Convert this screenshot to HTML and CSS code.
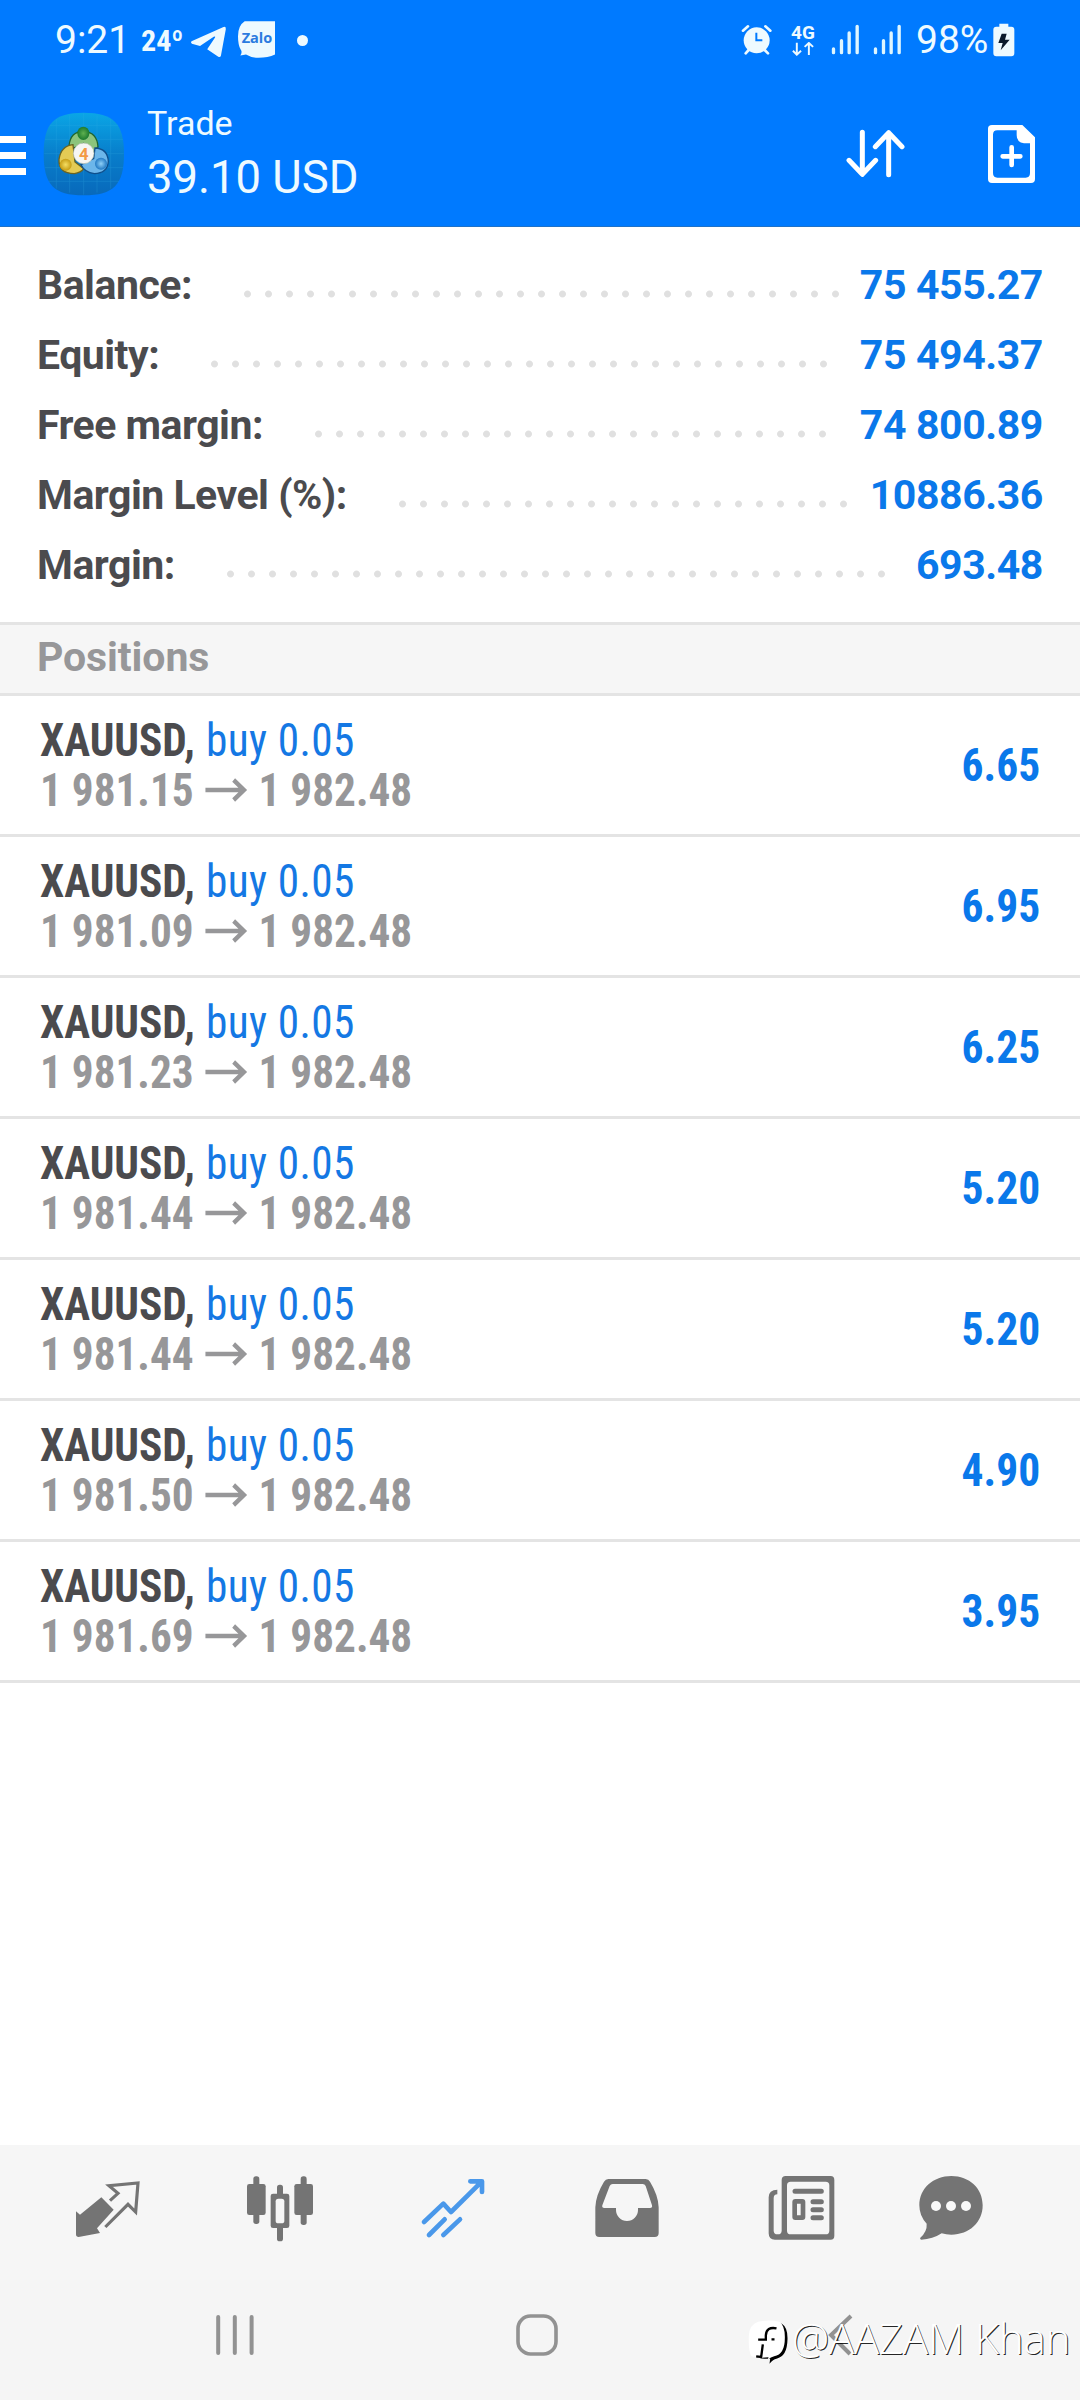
FILE: index.html
```html
<!DOCTYPE html>
<html lang="en">
<head>
<meta charset="utf-8">
<title>Trade</title>
<link rel="stylesheet" href="styles.css">
</head>
<body>
<div class="screen">
  <header class="header">
    <div class="status">
      <span class="clock">9:21</span>
      <span class="temp">24º</span>
      <svg class="telegram" viewBox="570 76 112 98"><path d="M574 123L672 79Q680 77 679 86L664 167Q662 173 656 170L622 147L646 111Q648 106 642 109L600 137L575 130Q570 126 574 123Z" fill="#eefaff"/></svg>
      <svg class="zalo" viewBox="711 60 117 116"><path d="M734 63H825V163Q804 173 775 173Q752 172 738 163L721 166Q728 156 722 148Q714 134 714 108Q714 76 734 63Z" fill="#eefaff"/><text x="725" y="130" textLength="92" lengthAdjust="spacingAndGlyphs" class="zalo-text">Zalo</text></svg>
      <span class="more-dot"></span>
      <span class="spacer"></span>
      <svg class="alarm" viewBox="123 72 93 93"><circle cx="170" cy="121" r="39" fill="#eefaff"/><path d="M129 92L144 79M196 79L211 92M146 150L137 160M194 150L204 160" stroke="#eefaff" stroke-width="8" stroke-linecap="round"/><path d="M169 98V121H187" fill="none" stroke="#007aff" stroke-width="6"/></svg>
      <div class="network"><span class="net-label">4G</span><svg class="net-arrows" viewBox="273 126 72 43"><path d="M290 128V164M278 153L290 165L303 153M327 166V130M314 141L327 129L340 141" fill="none" stroke="#eefaff" stroke-width="6"/></svg></div>
      <svg class="signal" viewBox="392 72 86 93"><path d="M399 147V158M423 122V158M446 99V158M470 79V158" stroke="#dff6ff" stroke-width="10" stroke-linecap="round"/></svg>
      <svg class="signal" viewBox="392 72 86 93"><path d="M399 147V158M423 122V158M446 99V158M470 79V158" stroke="#dff6ff" stroke-width="10" stroke-linecap="round"/></svg>
      <span class="percent">98%</span>
      <svg class="battery" viewBox="881 68 66 102"><path d="M900 79V70H927V79H936Q945 79 945 88V158Q945 168 936 168H891Q882 168 882 158V88Q882 79 891 79Z" fill="#eefaff"/><path d="M907 100H922L917 118H931L904 150L910 128H897Z" fill="#0b1a2b"/></svg>
    </div>
    <div class="appbar">
      <svg class="menu" viewBox="0 0 27 40"><path d="M0 4.5H26M0 20.5H26M0 36.5H26" stroke="#fff" stroke-width="6.8"/></svg>
      <svg class="logo" viewBox="10 10 246 252">
        <defs>
          <linearGradient id="sky" x2="0" y2="1"><stop offset="0" stop-color="#0aa6e6"/><stop offset=".5" stop-color="#087ecb"/><stop offset="1" stop-color="#0869bb"/></linearGradient>
          <radialGradient id="green"><stop offset="0" stop-color="#5fb04f"/><stop offset="1" stop-color="#1c7a2e"/></radialGradient>
          <radialGradient id="gold"><stop offset="0" stop-color="#f5de62"/><stop offset="1" stop-color="#c59c14"/></radialGradient>
          <radialGradient id="blue"><stop offset="0" stop-color="#8fd0f7"/><stop offset="1" stop-color="#2179c4"/></radialGradient>
        </defs>
        <path d="M132 12C222 12 253 44 253 136S222 260 132 260S12 228 12 136S42 12 132 12Z" fill="url(#sky)"/>
        <path d="M50 32V240M90 20V252M132 14V258M172 20V252M213 32V240M30 50H236M16 92H250M14 135H252M16 177H250M28 218H238" stroke="#39b4e8" stroke-width="2" opacity=".3"/>
        <path d="M88 112Q92 68 131 68Q172 70 175 114L158 134L132 104L102 118Z" fill="#8cc47c" stroke="#1f6530" stroke-width="4"/>
        <path d="M100 108Q64 112 58 152Q56 194 104 195Q124 192 132 180L106 160Z" fill="#e3cb55" stroke="#6b6420" stroke-width="4"/>
        <path d="M166 118Q204 120 206 158Q204 194 164 195Q134 190 124 168L162 150Z" fill="#6cb6ea" stroke="#0f4f8c" stroke-width="4"/>
        <ellipse cx="131" cy="74" rx="18" ry="20" fill="url(#green)"/>
        <circle cx="78" cy="168" r="18" fill="url(#gold)"/>
        <circle cx="184" cy="165" r="18" fill="url(#blue)"/>
        <circle cx="132" cy="134" r="31" fill="#f6f6f4" stroke="#b7c0b0" stroke-width="2"/>
        <text x="132" y="153" text-anchor="middle" class="logo-text">4</text>
      </svg>
      <div class="titles">
        <div class="title">Trade</div>
        <div class="profit">39.10 USD</div>
      </div>
      <svg class="sort" viewBox="438 387 177 147"><path d="M487 397V522M447 481L487 523L527 481M566 524V398M526 440L566 398L606 440" fill="none" stroke="#fff" stroke-width="15" stroke-linecap="round" stroke-linejoin="round"/></svg>
      <svg class="new" viewBox="862 371 145 180"><path d="M864 385Q864 374 876 374H967L1005 411V536Q1005 548 993 548H876Q864 548 864 536ZM892 390Q879 390 879 403V518Q879 532 892 532H977Q990 532 990 518V429H972Q950 426 950 404V390Z" fill="#fff" fill-rule="evenodd"/><path d="M935 441V494M908 468H961" stroke="#fff" stroke-width="14" stroke-linecap="round"/></svg>
    </div>
  </header>

  <section class="summary">
    <div class="sum-row"><span class="label">Balance:</span><span class="dots" style="--dots:29"></span><span class="value">75 455.27</span></div>
    <div class="sum-row"><span class="label">Equity:</span><span class="dots" style="--dots:30"></span><span class="value">75 494.37</span></div>
    <div class="sum-row"><span class="label">Free margin:</span><span class="dots" style="--dots:25"></span><span class="value">74 800.89</span></div>
    <div class="sum-row"><span class="label">Margin Level (%):</span><span class="dots" style="--dots:22"></span><span class="value">10886.36</span></div>
    <div class="sum-row"><span class="label">Margin:</span><span class="dots" style="--dots:32"></span><span class="value">693.48</span></div>
  </section>

  <h2 class="section-title">Positions</h2>
  <main class="positions">
    <div class="position"><div class="info"><div class="line"><span class="symbol">XAUUSD,</span><span class="side">buy 0.05</span></div><div class="line"><span class="price">1 981.15</span><svg class="arrow" viewBox="0 0 44 24"><path d="M0 12H41M30 2L41 12L30 22" /></svg><span class="price">1 982.48</span></div></div><span class="gain">6.65</span></div>
    <div class="position"><div class="info"><div class="line"><span class="symbol">XAUUSD,</span><span class="side">buy 0.05</span></div><div class="line"><span class="price">1 981.09</span><svg class="arrow" viewBox="0 0 44 24"><path d="M0 12H41M30 2L41 12L30 22" /></svg><span class="price">1 982.48</span></div></div><span class="gain">6.95</span></div>
    <div class="position"><div class="info"><div class="line"><span class="symbol">XAUUSD,</span><span class="side">buy 0.05</span></div><div class="line"><span class="price">1 981.23</span><svg class="arrow" viewBox="0 0 44 24"><path d="M0 12H41M30 2L41 12L30 22" /></svg><span class="price">1 982.48</span></div></div><span class="gain">6.25</span></div>
    <div class="position"><div class="info"><div class="line"><span class="symbol">XAUUSD,</span><span class="side">buy 0.05</span></div><div class="line"><span class="price">1 981.44</span><svg class="arrow" viewBox="0 0 44 24"><path d="M0 12H41M30 2L41 12L30 22" /></svg><span class="price">1 982.48</span></div></div><span class="gain">5.20</span></div>
    <div class="position"><div class="info"><div class="line"><span class="symbol">XAUUSD,</span><span class="side">buy 0.05</span></div><div class="line"><span class="price">1 981.44</span><svg class="arrow" viewBox="0 0 44 24"><path d="M0 12H41M30 2L41 12L30 22" /></svg><span class="price">1 982.48</span></div></div><span class="gain">5.20</span></div>
    <div class="position"><div class="info"><div class="line"><span class="symbol">XAUUSD,</span><span class="side">buy 0.05</span></div><div class="line"><span class="price">1 981.50</span><svg class="arrow" viewBox="0 0 44 24"><path d="M0 12H41M30 2L41 12L30 22" /></svg><span class="price">1 982.48</span></div></div><span class="gain">4.90</span></div>
    <div class="position"><div class="info"><div class="line"><span class="symbol">XAUUSD,</span><span class="side">buy 0.05</span></div><div class="line"><span class="price">1 981.69</span><svg class="arrow" viewBox="0 0 44 24"><path d="M0 12H41M30 2L41 12L30 22" /></svg><span class="price">1 982.48</span></div></div><span class="gain">3.95</span></div>
  </main>

  <nav class="tabs">
    <svg viewBox="93 96 216 216"><path d="M184 172L221 209L171 265L180 279L116 291Q108 291 108 283V214L120 224Z" fill="#747474"/><path d="M210 182L234 160L207 137L294 129L287 216L264 193L196 261" fill="none" stroke="#747474" stroke-width="9.5"/></svg>
    <svg viewBox="612 96 216 216"><g fill="#747474"><rect x="640" y="109" width="18" height="143" rx="8"/><rect x="621" y="132" width="56" height="93" rx="7"/><rect x="782" y="109" width="18" height="146" rx="8"/><rect x="763" y="132" width="56" height="93" rx="7"/><rect x="711" y="134" width="18" height="170" rx="8"/><rect x="692" y="161" width="56" height="103" rx="7"/></g><rect x="707" y="176" width="26" height="74" rx="8" fill="#f6f6f6"/></svg>
    <svg viewBox="1131 96 216 216"><path d="M1152 246L1210 191L1233 216L1325 125M1291 124H1326V156M1167 285L1214 238M1210 285L1260 238" fill="none" stroke="#4a98ea" stroke-width="14" stroke-linecap="round" stroke-linejoin="round"/></svg>
    <svg viewBox="93 96 216 216"><path d="M145 117H257Q266 117 270 125Q295 166 296 202V279Q296 291 284 291H118Q106 291 106 279V202Q107 166 132 125Q137 117 145 117ZM158 132Q152 132 149 138L127 196Q125 204 133 204H168V210A32 32 0 0 0 234 210V204H270Q278 204 276 196L257 138Q254 132 248 132Z" fill="#747474" fill-rule="evenodd"/></svg>
    <svg viewBox="615 96 216 216"><path d="M665 120Q665 108 677 108H812Q823 108 823 120V287Q823 299 812 299H645Q626 299 626 280V172Q626 149 652 149V163Q641 163 641 175V272Q641 283 653 283Q665 283 665 272ZM692 125Q681 125 681 136V272Q681 283 692 283H797Q808 283 808 272V136Q808 125 797 125Z" fill="#747474" fill-rule="evenodd"/><path d="M705 154H784M759 185H784M759 209H784M759 233H784" stroke="#747474" stroke-width="15" stroke-linecap="round"/><rect x="704" y="184" width="25" height="49" rx="2" fill="none" stroke="#747474" stroke-width="14"/></svg>
    <svg viewBox="1065 96 216 216"><path d="M1174 108C1228 108 1268 145 1268 196S1228 284 1174 284Q1158 284 1145 280Q1118 298 1084 299Q1078 298 1081 293Q1102 274 1100 251Q1078 228 1078 196C1078 145 1120 108 1174 108Z" fill="#747474"/><g fill="#f9f9f9"><circle cx="1128" cy="198" r="15"/><circle cx="1173" cy="198" r="15"/><circle cx="1218" cy="198" r="15"/></g></svg>
  </nav>

  <footer class="sysnav">
    <svg class="recents" viewBox="0 0 38 42"><path d="M2.2 3V39M18.8 3V39M35.6 3V39" stroke="#929292" stroke-width="4" stroke-linecap="round"/></svg>
    <svg class="home" viewBox="0 0 42 42"><rect x="2" y="2" width="38" height="38" rx="12.5" fill="none" stroke="#929292" stroke-width="3.6"/></svg>
    <svg class="back" viewBox="0 0 26 44"><path d="M23 3L3 22L22 41" fill="none" stroke="#929292" stroke-width="4"/></svg>
    <div class="watermark">
      <svg class="mark" viewBox="144 150 122 138"><path d="M174 163Q205 154 242 163Q260 174 259 210Q258 262 226 268Q216 270 205 283L207 268Q170 270 156 258Q146 246 148 200Q150 170 174 163Z" fill="#000" transform="translate(3 1)"/><path d="M174 158Q205 151 238 158Q255 170 254 208Q254 256 222 262Q212 264 203 272L205 265L178 267L154 262Q144 246 146 200Q148 166 174 158Z" fill="#fff"/><path d="M229 178Q199 172 197 199V212H174M214 211H223M188 226L183 264L168 262" fill="none" stroke="#000" stroke-width="7"/></svg>
      <span class="handle">@AAZAM Khan</span>
    </div>
  </footer>
</div>
</body>
</html>
```
FILE: styles.css
```css
* { box-sizing: border-box; }

body {
  margin: 0;
  background: #fff;
  font-family: Roboto, "Noto Sans", sans-serif;
}

svg { display: block; flex: none; }

.screen {
  width: 1080px;
  height: 2400px;
  display: flex;
  flex-direction: column;
  background: #fff;
  white-space: nowrap;
}

/* Header */
.header {
  height: 227px;
  background: #007aff;
  border-bottom: 1px solid #1f72c8;
  color: #eefaff;
}

.status {
  height: 79px;
  display: flex;
  align-items: center;
  padding-left: 55px;
  padding-right: 65px;
}

.clock { font-size: 39px; width: 86px; }
.temp { font: 700 30px "Roboto Condensed", Roboto, sans-serif; width: 49px; padding-top: 2px; }
.telegram { width: 37px; height: 33px; padding-top: 1px; margin-top: 4px; }
.zalo { width: 39px; height: 39px; margin-left: 10px; }
.zalo-text { font: 700 45px "Open Sans", sans-serif; fill: #2b7be0; }
.more-dot { width: 11px; height: 11px; border-radius: 50%; background: #eefaff; margin-left: 21px; margin-top: 1px; }
.spacer { flex: 1; }
.alarm { width: 31px; height: 31px; }
.network { width: 26px; margin-left: 18px; display: flex; flex-direction: column; align-items: center; padding-top: 1px; }
.net-label { font-size: 19px; font-weight: 700; line-height: 18px; }
.net-arrows { width: 24px; height: 14px; }
.signal { width: 29px; height: 31px; margin-left: 15px; }
.signal + .signal { margin-left: 13px; }
.percent { font-size: 39px; margin-left: 14px; width: 72px; }
.battery { width: 22px; height: 34px; margin-left: 5px; }

.appbar {
  height: 147px;
  display: flex;
  align-items: center;
  padding-right: 44px;
  padding-top: 2px;
}

.menu { width: 27px; height: 40px; margin-top: 3px; }
.logo { width: 82px; height: 84px; margin-left: 16px; }
.logo-text { font: 700 50px Roboto, sans-serif; fill: #f39a45; }
.titles { margin-left: 22px; flex: 1; margin-top: 4px; }
.title { font-size: 34px; line-height: 44px; }
.profit { font-size: 45.4px; line-height: 66px; }
.sort { width: 59px; height: 49px; }
.new { width: 49px; height: 60px; margin-left: 82px; }

/* Account summary */
.summary {
  height: 395px;
  padding: 23px 37px 0 37px;
  font-size: 41px;
  font-weight: 700;
}

.sum-row { height: 70px; display: flex; align-items: center; }
.label { color: #4b4b4e; letter-spacing: -0.5px; }
.dots {
  width: calc(var(--dots) * 21px);
  height: 8px;
  margin-left: 45px;
  margin-top: 17px;
  background: radial-gradient(circle at 10.5px 4px, #e0e0e0 3px, transparent 3.9px) 0 0 / 21px 8px;
}
.value { margin-left: auto; color: #0a78ea; letter-spacing: -0.4px; }

/* Positions */
.section-title {
  margin: 0;
  height: 74px;
  padding: 0 0 4px 37px;
  border-top: 3px solid #e4e4e4;
  border-bottom: 3px solid #e4e4e4;
  background: #f6f6f6;
  color: #979799;
  font-size: 41px;
  font-weight: 700;
  letter-spacing: -0.1px;
  line-height: 64px;
}

.positions { flex: 1; }
.position {
  height: 141px;
  display: flex;
  align-items: center;
  justify-content: space-between;
  padding: 0 40px 0 40px;
  border-bottom: 3px solid #e4e4e4;
  font-family: "Roboto Condensed", Roboto, sans-serif;
  font-size: 46px;
  font-weight: 700;
}

.info { transform: scaleX(0.94); transform-origin: left; }
.line { display: flex; align-items: center; height: 50px; }
.symbol { color: #4b4b4e; }
.side { color: #1478e4; font-weight: 450; margin-left: 12px; letter-spacing: 0.4px; }
.price { color: #979799; }
.arrow { width: 48px; height: 24px; margin: 0 10px 0 11px; fill: none; stroke: #979799; stroke-width: 4.5; }
.gain { color: #0a78ea; transform: scaleX(0.945); transform-origin: right; }

/* Bottom tabs */
.tabs {
  height: 135px;
  display: grid;
  grid-template-columns: 173px 173px 174px 174px 150px 72px;
  padding: 27px 0 0 71px;
  background: #f6f6f6;
}
.tabs svg { width: 72px; height: 72px; }

/* System navigation */
.sysnav {
  position: relative;
  height: 120px;
  display: flex;
  align-items: center;
  padding: 0 0 10px 216px;
  background: #f5f5f5;
}
.recents { width: 38px; height: 42px; }
.home { width: 42px; height: 42px; margin-left: 262px; }
.back { width: 26px; height: 44px; margin-left: 270px; }

.watermark {
  position: absolute;
  left: 748px;
  top: 28px;
  display: flex;
  align-items: center;
}
.mark { width: 41px; height: 46px; margin-top: 8px; }
.handle {
  margin-left: 3px;
  font: 300 42px/60px "Open Sans", sans-serif;
  letter-spacing: -0.2px;
  color: #fff;
  text-shadow: 1px 1px 0.5px rgba(0, 0, 0, 0.85);
}
```
